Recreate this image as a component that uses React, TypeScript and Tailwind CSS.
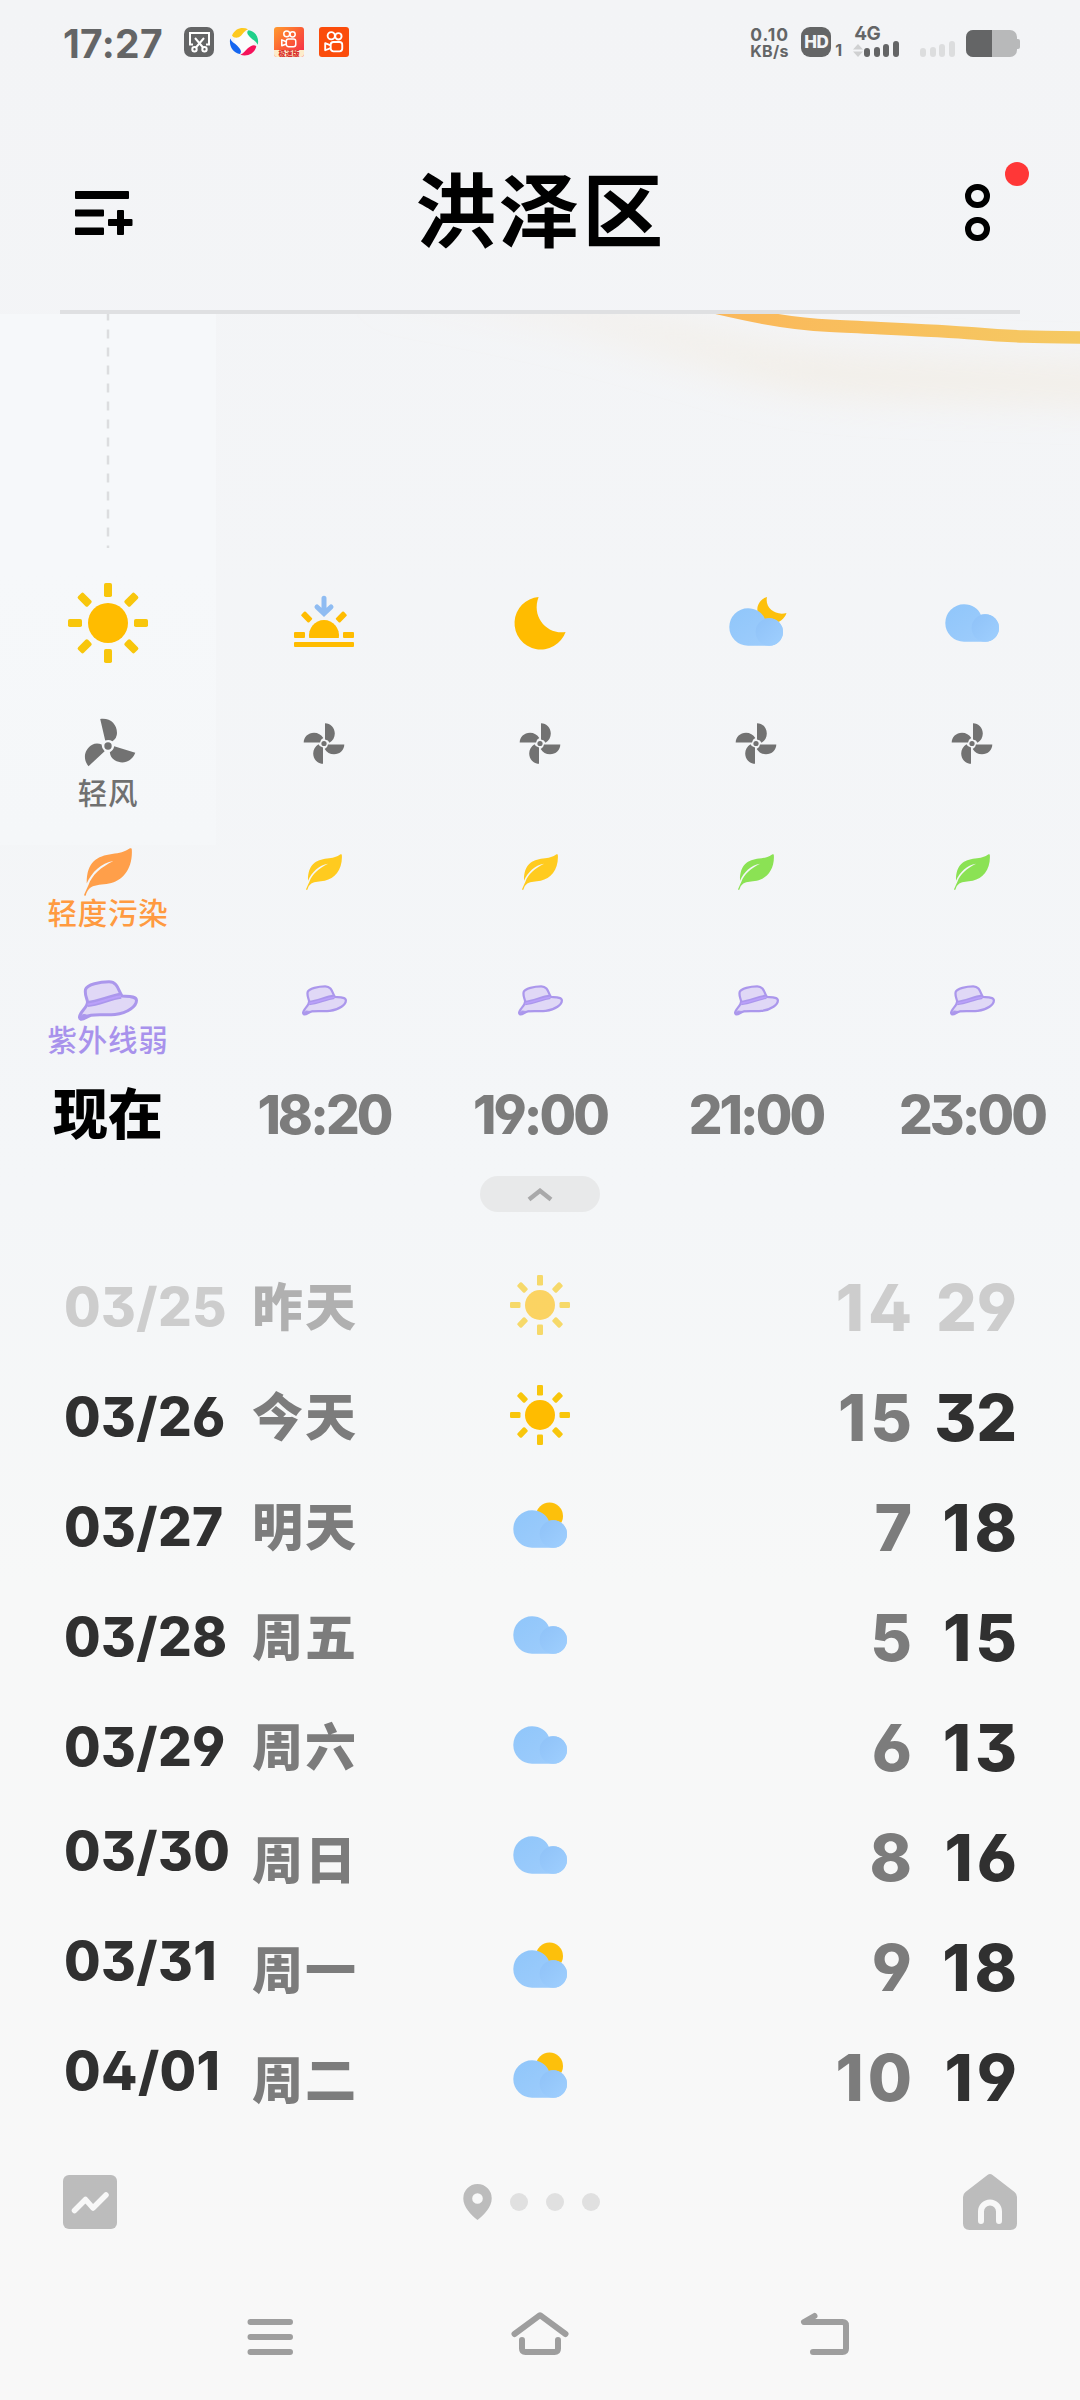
import type { ReactNode } from "react";

type Weather = "sun" | "sunset" | "moon" | "cloudMoon" | "cloud" | "cloudSun";

interface Hour {
  time: string;
  weather: Weather;
  leaf: string;
}

interface Day {
  date: string;
  week: string;
  weather: Weather;
  low: number;
  high: number;
}

const hours: Hour[] = [
  { time: "现在", weather: "sun", leaf: "#ff9f4a" },
  { time: "18:20", weather: "sunset", leaf: "#ffcb1f" },
  { time: "19:00", weather: "moon", leaf: "#ffcb1f" },
  { time: "21:00", weather: "cloudMoon", leaf: "#8be254" },
  { time: "23:00", weather: "cloud", leaf: "#8be254" },
];

const days: Day[] = [
  { date: "03/25", week: "昨天", weather: "sun", low: 14, high: 29 },
  { date: "03/26", week: "今天", weather: "sun", low: 15, high: 32 },
  { date: "03/27", week: "明天", weather: "cloudSun", low: 7, high: 18 },
  { date: "03/28", week: "周五", weather: "cloud", low: 5, high: 15 },
  { date: "03/29", week: "周六", weather: "cloud", low: 6, high: 13 },
  { date: "03/30", week: "周日", weather: "cloud", low: 8, high: 16 },
  { date: "03/31", week: "周一", weather: "cloudSun", low: 9, high: 18 },
  { date: "04/01", week: "周二", weather: "cloudSun", low: 10, high: 19 },
];

/* Weather icons, all drawn around the centre of an 80x80 box */
const CloudShape = ({ dy = 0 }: { dy?: number }) => (
  <g transform={`translate(0 ${dy})`}>
    <path
      d="M32 21.3a18.7 18.7 0 0 0 0 37.4h21.3a13.7 13.7 0 0 0 0-27.4Q51 31.200 48.800 31.700C46.500 26 40 21.300 32 21.300Z"
      fill="url(#cloud)"
    />
    <circle cx="53.3" cy="45" r="13.7" fill="url(#puff)" />
  </g>
);

const WeatherIcon = ({ name, size = 80 }: { name: Weather; size?: number }) => (
  <svg width={size} height={size} viewBox="0 0 80 80" className="shrink-0">
    {name === "sun" && (
      <g>
        <circle cx="40" cy="40" r="20" fill="#ffbc00" />
        {[0, 45, 90, 135, 180, 225, 270, 315].map((a) => (
          <rect key={a} x="36" y="0" width="8" height="14" rx="1.8" fill="#f8c60c" transform={`rotate(${a} 40 40)`} />
        ))}
      </g>
    )}
    {name === "sunset" && (
      <g fill="#ffbc00">
        <path d="M25.200 55a15 15.500 0 1 1 29.600 0Z" />
        <rect x="10" y="49" width="11" height="6" rx="1" />
        <rect x="59" y="49" width="11" height="6" rx="1" />
        <rect x="10" y="59" width="60" height="5" rx="1" />
        <rect x="17.2" y="31" width="11" height="6" rx="1.2" transform="rotate(45 22.7 34)" />
        <rect x="51.8" y="31" width="11" height="6" rx="1.2" transform="rotate(-45 57.3 34)" />
        <path d="M40 15.2V30M33 24l7 6.6 7-6.6" fill="none" stroke="#8fbcf2" strokeWidth="5" strokeLinecap="round" />
      </g>
    )}
    {name === "moon" && (
      <path d="M38.6 14A26.3 26.3 0 1 0 65.6 49C47 52 31 34 38.6 14Z" fill="#ffbc00" />
    )}
    {name === "cloudMoon" && (
      <g>
        <path d="M51 14c-7 2-10.500 9-9.500 14s8 12 15 12 12-4 14-10c-11 3-22-5-19.500-16Z" fill="#fdc00b" />
        <CloudShape dy={4} />
      </g>
    )}
    {name === "cloud" && <CloudShape />}
    {name === "cloudSun" && (
      <g>
        <circle cx="49.500" cy="31" r="13.500" fill="#fdc00b" />
        <CloudShape dy={4} />
      </g>
    )}
  </svg>
);

const Fan = ({ blades }: { blades: 3 | 4 }) => (
  <svg width="60" height="60" viewBox="-30 -30 60 60" fill="#727272">
    {blades === 3
      ? [0, 120, 240].map((a) => (
          <path key={a} transform={`translate(0 2) rotate(${a})`} d="M-7.800-27C2-28.500 9-22 9-13q0 5-4.500 8.300Q1-7-2.800-5.500Z" />
        ))
      : [0, 90, 180, 270].map((a) => (
          <path key={a} transform={`translate(0 -.5) rotate(${a})`} d="M1-20.300c5.500 0 9.800 4.500 9.800 10.300 0 4-2 7.300-5.300 9.300Q4.500-3.500 1-4Z" />
        ))}
    <circle cy={blades === 3 ? 2 : -0.5} r={blades === 3 ? 3.7 : 2.6} />
  </svg>
);

const Leaf = ({ color, size }: { color: string; size: number }) => (
  <svg width={size} height={size} viewBox="0 0 48 48">
    <path
      fill={color}
      d="M47.800 1.500C47.800 0 46.500 0 45.500.5 40 4 36 5 28 6 13 8 2.500 14 2.700 35.500 8 24 17 15 29.500 13 17 19 8 27 4.500 37L.2 46.500Q.3 48.600 1.700 47.600 3 42 7 39.300C12 36.500 18 37 25 35.600 39 33 49 20 47.800 1.500Z"
    />
  </svg>
);

const Hat = ({ width }: { width: number }) => (
  <svg width={width} viewBox="0 0 60 42">
    <path
      d="M9.500 22C9 18 6.500 15 7.500 9.500 9 4.500 22 1.800 31 1.800c9 0 9.500 9.500 13 14.200 6 .5 14.500 0 14.500 4.500C58.500 26 50 33 37 34.500c-9 1-16-.5-24 .8-4 1-7 4.500-10 4-3.500-1.500 0-6.500 2.500-9.500 2.500-3 4-5 4-7.800Z"
      fill="#e0d8f6"
      stroke="#ab97ec"
      strokeWidth="3"
      strokeLinejoin="round"
    />
    <path d="M9.500 24C21 23 31 17.500 43 15.800" fill="none" stroke="#ab97ec" strokeWidth="6" />
    <path d="M9.500 24.500C21 23 31 18 43 16.300" fill="none" stroke="#baa0fa" strokeWidth="2" />
    <path d="M2 39.500c0-3 2-5 4-5 4 1 6 .5 9 .2-5 1-7 4.800-13 4.800Z" fill="#ab97ec" stroke="#ab97ec" />
  </svg>
);

const KuaishouMark = ({ className }: { className?: string }) => (
  <svg viewBox="0 0 20 20" fill="none" stroke="#fff" strokeWidth="1.700" className={className}>
    <circle cx="7.500" cy="4.300" r="3.300" />
    <circle cx="14" cy="4.800" r="2.900" />
    <rect x="7" y="10" width="10.500" height="8.500" rx="2.500" />
    <path d="M7 13 2 11v6.500L7 15.600" strokeLinejoin="round" />
  </svg>
);

const Signal = ({ className }: { className: string }) => (
  <div className={`flex items-end gap-[3.600px] ${className}`}>
    <i className="h-[9px] w-[6px] rounded-[3px] bg-current"></i>
    <i className="h-[10px] w-[6px] rounded-[3px] bg-current"></i>
    <i className="h-[13px] w-[6px] rounded-[3px] bg-current"></i>
    <i className="h-[16px] w-[6px] rounded-[3px] bg-current"></i>
  </div>
);

const StatusBar = () => (
  <div className="flex h-[85px] items-start justify-between pt-[27px] pl-[63px] pr-[60px] font-bold text-[#646566]">
    <div className="flex h-[30px] items-center">
      <span className="w-[121px] pt-[3px] text-[39px] leading-[30px] tracking-[0.300px]">17:27</span>
      <svg width="30" height="30" viewBox="0 0 30 30">
        <rect width="30" height="30" rx="7" fill="#646566" />
        <g fill="none" stroke="#fff" strokeWidth="2">
          <path d="M9 17.500H6V6h19v11.500h-3M11 11l8.500 10M20 11l-8.500 10" />
          <circle cx="10.500" cy="22.300" r="2.200" />
          <circle cx="20.500" cy="22.300" r="2.200" />
        </g>
      </svg>
      {/* four coloured crescents around a light core */}
      <svg width="30" height="30" viewBox="0 0 30 30" className="ml-[15px]">
        <circle cx="15" cy="15" r="10" fill="#fbfcfc" />
        <path d="M3 8.500C6 1.500 13-.5 19 2.200c-3.500 1.300-4.500 4-7 6.500S5 11.500 3 8.500Z" fill="#fdc91f" />
        <path d="M19.500 3.200c7 .8 11 8 9.200 14.600-1.300-3.500-4.200-4.300-6.700-6.800S16.500 5.500 19.500 3.200Z" fill="#1fd08a" />
        <path d="M27.300 19.500c-1.800 7.500-9.300 10.500-16 8.300 3.500-1.300 5-4.300 7.500-6.500s6.500-4.500 8.500-1.800Z" fill="#f5125a" />
        <path d="M11 27C4 25.800-.300 19 1.200 11.500c1.300 3.500 4.300 4.500 6.800 7S13.500 24 11 27Z" fill="#1566f0" />
      </svg>
      <div className="ml-[15px] flex h-[30px] w-[30px] flex-col items-center overflow-hidden rounded-[3px] bg-linear-to-br from-[#ff9a2e] via-[#fb5c34] to-[#f5194c]">
        <KuaishouMark className="mt-[3px] h-[18px] w-[18px]" />
        <span className="mt-[2px] w-full bg-[#fdeccb] text-center text-[7px] leading-[7px] font-black text-[#d9302c]">极速版</span>
      </div>
      <div className="ml-[15px] flex h-[30px] w-[30px] items-center justify-center rounded-[3px] bg-[#fb4c0b]">
        <KuaishouMark className="h-[22px] w-[22px]" />
      </div>
    </div>
    <div className="flex h-[30px]">
      <div className="w-[51px] text-[17.500px] leading-[16px]">
        <div className="tracking-[1px]">0.10</div>
        <div className="text-[16px] tracking-[0.300px]">KB/s</div>
      </div>
      <div className="flex h-[30px] w-[30px] items-center justify-center rounded-[9px] bg-[#646566] pt-px text-[17px] font-extrabold tracking-[-0.500px] text-[#f3f4f6]">HD</div>
      <span className="mt-[15px] ml-[4px] w-[18px] text-[16px] leading-[17px]">1</span>
      <div className="w-[48px]">
        <div className="pl-px text-[19px] leading-[14px] tracking-[-0.500px]">4G</div>
        <div className="flex items-end">
          <svg width="10" height="13" viewBox="0 0 10 13" className="mr-px" fill="#cfd0d1">
            <path d="M5 0l5 5.500H0ZM5 13 0 7.500h10Z" />
          </svg>
          <Signal className="h-[16px]" />
        </div>
      </div>
      <Signal className="ml-[19px] h-[30px] text-[#dcddde]" />
      <div className="mt-[3px] ml-[11px] flex h-[27px] items-center">
        <div className="h-[27px] w-[51px] overflow-hidden rounded-[7px] bg-[#b8b9ba]">
          <div className="h-full w-[26px] bg-[#646566]"></div>
        </div>
        <div className="h-[10px] w-[3px] rounded-r-[2px] bg-[#b8b9ba]"></div>
      </div>
    </div>
  </div>
);

const Header = () => (
  <div className="mx-[60px] flex h-[229px] items-start justify-between border-b-4 border-[#dfe0e2] pr-[30px] pl-[15px]">
    <svg width="58" height="46" viewBox="0 0 58 46" className="mt-[105px]" fill="#000">
      <rect y="1" width="54" height="8" rx="1" />
      <rect y="19.500" width="29" height="7" rx="1" />
      <rect y="37.500" width="29" height="7.500" rx="1" />
      <rect x="33" y="29" width="24.500" height="7" rx="1" />
      <rect x="42" y="20" width="7" height="25" rx="1" />
    </svg>
    <h1 className="mt-[69px] ml-[-17px] text-[81px] leading-[116px] font-bold tracking-[2.500px] text-black">洪泽区</h1>
    <div className="relative mt-[99px] flex w-[25px] flex-col gap-[9px]">
      <div className="h-[24px] w-[25px] rounded-full border-[6px] border-black"></div>
      <div className="h-[24px] w-[25px] rounded-full border-[6px] border-black"></div>
      <div className="absolute -top-[22px] left-[40px] h-6 w-6 rounded-full bg-[#ff3737]"></div>
    </div>
  </div>
);

const TempCurve = () => (
  <svg width="1080" height="261" viewBox="0 314 1080 261" className="block">
    <defs>
      <linearGradient id="line" x1="700" x2="1080" y1="0" y2="0" gradientUnits="userSpaceOnUse">
        <stop offset="0" stopColor="#fbb75a" />
        <stop offset="1" stopColor="#f5c962" />
      </linearGradient>
      <linearGradient id="shade" x1="300" x2="800" y1="0" y2="0" gradientUnits="userSpaceOnUse">
        <stop offset="0" stopColor="#f4e8dc" stopOpacity="0" />
        <stop offset="1" stopColor="#f1e8d8" />
      </linearGradient>
      <linearGradient id="cloud" x1="0" y1="0" x2="1" y2="1">
        <stop offset="0" stopColor="#90c6fa" />
        <stop offset="1" stopColor="#9fcdfc" />
      </linearGradient>
      <linearGradient id="puff" x1="0" y1="0" x2="1" y2="1">
        <stop offset="0" stopColor="#8fc2f8" />
        <stop offset="1" stopColor="#9fcffe" />
      </linearGradient>
      <filter id="soft" x="-20%" y="-100%" width="140%" height="300%">
        <feGaussianBlur stdDeviation="18" />
      </filter>
    </defs>
    <path
      d="M380 280C560 300 680 342 760 362S960 378 1140 386"
      fill="none"
      stroke="url(#shade)"
      strokeOpacity=".5"
      strokeWidth="40"
      filter="url(#soft)"
    />
    <rect y="314" width="216" height="261" fill="#f6f8fa" />
    <path d="M108 311.500V548" stroke="#dcdddf" strokeWidth="2.500" strokeDasharray="9 9" />
    <path d="M670 297C730 311 775 323 830 325.800S935 330 975 333.500 1035 337 1090 337.500" fill="none" stroke="url(#line)" strokeWidth="12.500" />
  </svg>
);

const Label = ({ children, className }: { children: ReactNode; className: string }) => (
  <div className={`text-[29.500px] leading-[30px] font-medium whitespace-nowrap tracking-[0.700px] ${className}`}>{children}</div>
);

const HourColumn = ({ hour, now }: { hour: Hour; now: boolean }) => (
  <div
    className={`flex h-[588px] flex-col items-center ${
      now ? "bg-linear-to-b from-[#f6f8fa] to-[#f5f7f9] bg-[length:100%_270px] bg-no-repeat" : ""
    }`}
  >
    <div className="flex h-[96px] items-center">
      <WeatherIcon name={hour.weather} />
    </div>
    <div className="flex h-[160px] flex-col items-center pt-[43px]">
      <Fan blades={now ? 3 : 4} />
      {now && <Label className="mt-[4px] text-[#707070]">轻风</Label>}
    </div>
    <div className="flex h-[134px] flex-col items-center pt-[17px]">
      <div className="flex h-12 items-center">
        <Leaf color={hour.leaf} size={now ? 48 : 36} />
      </div>
      {now && <Label className="mt-[2px] text-[#ff9a40]">轻度污染</Label>}
    </div>
    <div className="flex h-[100px] flex-col items-center pt-[15px]">
      <div className="flex h-[42px] items-center">
        <Hat width={now ? 60 : 45} />
      </div>
      {now && <Label className="mt-[3px] text-[#a892ec]">紫外线弱</Label>}
    </div>
    <div
      className={`flex h-[98px] items-center whitespace-nowrap ${
        now ? "pt-px text-[55px] font-black text-black" : "pt-[3px] text-[53px] font-extrabold tracking-[-2.900px] text-[#7c7c7c]"
      }`}
    >
      {hour.time}
    </div>
  </div>
);

/* A leading 1 is narrow, so those numbers are set wider to keep the column even */
const Temp = ({ value, className }: { value: number; className: string }) => (
  <div
    className={`pt-[2px] text-right text-[64px] font-extrabold ${
      String(value).startsWith("1") ? "-mr-[4px] tracking-[4px]" : ""
    } ${className}`}
  >
    {value}
  </div>
);

const DayRow = ({ day, index }: { day: Day; index: number }) => (
  <div className="flex h-[110px] items-center">
    <div className={`w-[188px] pt-[2px] text-[53px] font-extrabold tracking-[0.400px] ${index === 0 ? "text-[#cdcdcd]" : "text-[#303030]"} ${index > 4 ? "pb-[12px]" : ""}`}>
      {day.date}
    </div>
    <div className={`w-[227px] pt-[2px] text-[51px] leading-[70px] font-black tracking-[2px] ${index === 0 ? "text-[#b0b0b0]" : "text-[#7c7c7c]"} ${index > 4 ? "pt-[7px]" : ""}`}>
      {day.week}
    </div>
    <div className={`flex w-[122px] justify-center pb-[5px] ${index === 0 ? "opacity-60" : ""}`}>
      <WeatherIcon name={day.weather} size={day.weather === "sun" ? 60 : 80} />
    </div>
    <div className="flex flex-1 justify-end">
      <Temp value={day.low} className={index === 0 ? "text-[#cdcdcd]" : "text-[#7c7c7c]"} />
    </div>
    <div className="flex w-[105px] justify-end">
      <Temp value={day.high} className={index === 0 ? "text-[#cdcdcd]" : "text-[#303030]"} />
    </div>
  </div>
);

const BottomBar = () => (
  <div className="flex h-[140px] items-center justify-between pr-[63px] pl-[63px]">
    <svg width="54" height="56" viewBox="0 -1 54 56">
      <rect width="54" height="54" rx="6" fill="#bcbcbc" />
      <path d="M11.500 35.500 22.500 24.500 30 33 43 20" fill="none" stroke="#f8f8f8" strokeWidth="5.500" strokeLinecap="round" strokeLinejoin="round" />
    </svg>
    <div className="ml-[-17px] flex items-center gap-[18px]">
      <svg width="29" height="36" viewBox="0 0 29 36" fill="#bcbcbc" fillRule="evenodd">
        <path d="M14.500 0A14.200 14.200 0 0 0 .3 14.500C.3 23 8 31 14.500 36 21 31 28.700 23 28.700 14.500A14.200 14.200 0 0 0 14.500 0Zm0 9.200a5.300 5.300 0 1 1 0 10.600 5.300 5.300 0 0 1 0-10.600Z" />
      </svg>
      <i className="h-[18px] w-[18px] rounded-full bg-[#e0e0e0]"></i>
      <i className="h-[18px] w-[18px] rounded-full bg-[#e0e0e0]"></i>
      <i className="h-[18px] w-[18px] rounded-full bg-[#e0e0e0]"></i>
    </div>
    <svg width="54" height="58" viewBox="0 0 54 58">
      <path d="M24.500 2Q27 0 29.500 2L51.500 19Q54 21 54 24V50.500Q54 57 47.500 57H6.500Q0 57 0 50.500V24Q0 21 2.500 19Z" fill="#bcbcbc" />
      <path d="M18 48V38.500a9 9 0 0 1 18 0V48" fill="none" stroke="#f8f8f8" strokeWidth="6" strokeLinecap="round" />
    </svg>
  </div>
);

const NavBar = () => (
  <div className="flex h-[128px] items-start pt-[38px] pl-[240px]">
    <svg width="600" height="54" viewBox="240 2310 600 54" fill="none" stroke="#9e9e9e" strokeWidth="6" strokeLinecap="round" strokeLinejoin="round" className="overflow-visible">
      <path d="M250.500 2322H290M250.500 2337H290M250.500 2352H290" />
      <path d="M514.500 2334 540 2315.200 565.500 2334M522 2340v8.500q0 3.500 3.500 3.500h29q3.500 0 3.500-3.500V2340" />
      <path d="M814.500 2316 804 2322H842.500q3.500 0 3.500 3.500v23q0 3.500-3.500 3.500H813" />
    </svg>
  </div>
);

const App = () => {
  return (
    <div className="h-[2400px] w-[1080px] overflow-hidden bg-[linear-gradient(#f3f4f6,#f4f6f8_50%,#f7f8f8_66%,#f8f8f8)] font-[Inter,'Noto_Sans_CJK_SC',sans-serif] [font-feature-settings:'cv03','cv04','ss01']">
      <StatusBar />
      <Header />
      <TempCurve />
      {/* Hourly forecast */}
      <div className="grid grid-cols-5">
        {hours.map((hour, i) => (
          <HourColumn key={hour.time} hour={hour} now={i === 0} />
        ))}
      </div>
      <div className="flex h-[89px] justify-center pt-[13px]">
        <div className="flex h-[36px] w-[120px] items-center justify-center rounded-full bg-[#e8e9ea]">
          <svg width="26" height="14" viewBox="0 0 26 14" className="mt-[2px]">
            <path d="M2 11.500 13 2.800 24 11.500" fill="none" stroke="#a9a9aa" strokeWidth="4.500" />
          </svg>
        </div>
      </div>
      {/* Daily forecast */}
      <div className="pr-[63px] pl-[64px]">
        {days.map((day, i) => (
          <DayRow key={day.date} day={day} index={i} />
        ))}
      </div>
      <BottomBar />
      <NavBar />
    </div>
  );
};

export default App;
